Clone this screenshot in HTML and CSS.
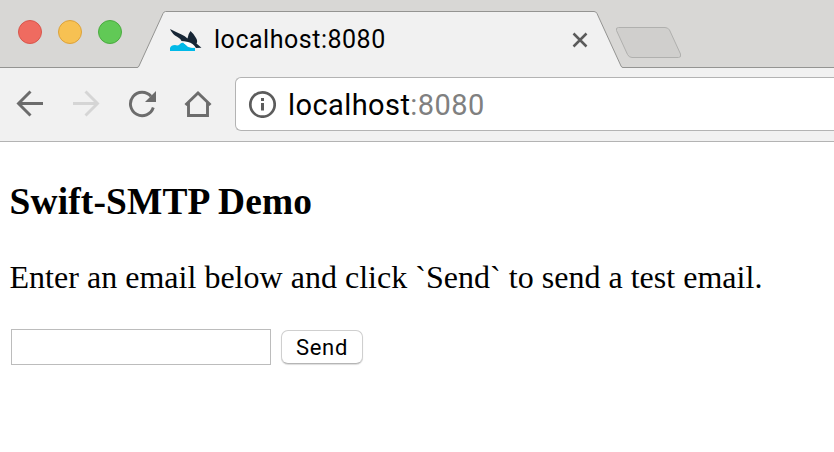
FILE: index.html
```
<!DOCTYPE html>
<html lang="en">
<head>
<meta charset="utf-8">
<title>localhost:8080</title>
<link rel="stylesheet" href="styles.css">
</head>
<body>
<header class="tabstrip">
  <div class="lights"><span class="light red"></span><span class="light yellow"></span><span class="light green"></span></div>
  <div class="tab">
    <svg class="tab-shape" width="486" height="57" viewBox="0 0 486 57"><path d="M0 56.500 Q1.300 56.500 2 55 L26 2.500 Q27 .5 28.500 .5 H457 Q459 .5 460 2.500 L484 55 Q484.700 56.500 486 56.500 V57 H0Z" fill="#f1f1f1"/><path d="M0 56.500 Q1.300 56.500 2 55 L26 2.500 Q27 .5 28.500 .5 H457 Q459 .5 460 2.500 L484 55 Q484.700 56.500 486 56.500" fill="none" stroke="#949492"/></svg>
    <svg class="favicon" width="32" height="24" viewBox="0 0 32 24"><path d="M0 22V19Q1 16 5 16Q8 17 9.500 15.500Q12 12.500 15 15L18 18L25 19V22Z" fill="#00b9e8"/><path d="M13.500 14Q17 12 22 14L25.500 18Q21 20 17.500 17Z" fill="#fff"/><path d="M0 0Q7 3.500 11.500 5.500Q15 7 17.500 9.500Q18 5 20.500 2Q24 5 26 9Q28 12 26.500 14.500L31.500 18.800L26 19Q23 14 18 13Q14 12 11.500 12Q11 10 7.500 8Q2 5 0 0Z" fill="#172635"/></svg>
    <span class="tab-title">localhost:8080</span>
    <svg class="close" width="16" height="16" viewBox="0 0 16 16"><path d="M1.500 1.500L14.500 14.500M14.500 1.500L1.500 14.500" stroke="#5b5b5b" stroke-width="2.500"/></svg>
  </div>
  <svg class="newtab" width="68" height="34" viewBox="0 0 68 34"><path d="M3.500 2.500H50Q53 2.500 54.500 5L65.500 29Q66.500 32.500 63.500 32.500H17Q14 32.500 12.500 29.500L1.500 5.500Q.5 2.500 3.500 2.500Z" fill="#d0cfcd" stroke="#b0b0ae"/></svg>
</header>
<nav class="toolbar">
  <svg class="nav-icon" width="28" height="28" viewBox="0 0 28 28"><path d="M27 13.500H3M14.500 1.500L2.500 13.500L14.500 25.500" fill="none" stroke="#6c6c6c" stroke-width="2.900"/></svg>
  <svg class="nav-icon" width="28" height="28" viewBox="0 0 28 28"><path d="M1 13.500H25M13.500 1.500L25.500 13.500L13.500 25.500" fill="none" stroke="#d5d5d5" stroke-width="2.900"/></svg>
  <svg class="nav-icon" width="28" height="28" viewBox="0 0 28 28"><path d="M23 6.300A11.700 11.700 0 1 0 25.300 17.500" fill="none" stroke="#6c6c6c" stroke-width="2.900"/><path d="M28 1V12H17Z" fill="#6c6c6c"/></svg>
  <svg class="nav-icon" width="28" height="28" viewBox="0 0 28 28"><path d="M1.500 15L14 3L26.500 15M4.500 12V25.500H23.500V12" fill="none" stroke="#6c6c6c" stroke-width="2.900"/></svg>
  <div class="address">
    <svg class="info" width="28" height="28" viewBox="0 0 28 28"><circle cx="14.500" cy="14.500" r="12.200" fill="none" stroke="#5c5c5c" stroke-width="2.700"/><path d="M13 8h3v3h-3zM13 13h3v7.500h-3z" fill="#5c5c5c"/></svg>
    <span class="url">localhost<span class="port">:8080</span></span>
  </div>
</nav>
<main class="page">
  <h3>Swift-SMTP Demo</h3>
  <p>Enter an email below and click `Send` to send a test email.</p>
  <form class="form">
    <input class="email" type="text" aria-label="Email">
    <button class="send" type="button">Send</button>
  </form>
</main>
</body>
</html>
```
FILE: styles.css
```
* { box-sizing: border-box; }
body { margin: 0; height: 452px; overflow: hidden; background: #fff; color: #000; }
svg { display: block; flex: none; }
.tabstrip { height: 68px; display: flex; align-items: flex-start; background: #d8d7d5; border-bottom: 1px solid #949492; }
.lights { display: flex; gap: 16px; padding: 20px 0 0 18px; width: 137px; flex: none; }
.light { width: 24px; height: 24px; border-radius: 50%; border: 1px solid; }
.red { background: #ef6b60; border-color: #d8564c; }
.yellow { background: #f7c152; border-color: #dca23b; }
.green { background: #61c956; border-color: #4bab40; }
.tab { position: relative; width: 486px; height: 57px; margin-top: 11px; display: flex; align-items: center; padding-left: 33px; flex: none; }
.tab-shape { position: absolute; left: 0; top: 0; }
.favicon { position: relative; margin-top: 2px; }
.tab-title { position: relative; margin-left: 12px; width: 358px; font: 25px/30px Roboto, sans-serif; letter-spacing: .52px; }
.close { position: relative; margin-top: 1px; }
.newtab { margin: 25px 0 0 -8px; }
.toolbar { height: 74px; display: flex; align-items: flex-start; background: #f1f1f1; border-bottom: 1px solid #b3b3b3; padding: 9px 0 0 16px; }
.nav-icon { margin: 13px 28px 0 0; }
.nav-icon:nth-child(4) { margin-right: 23px; }
.address { flex: 1; height: 54px; display: flex; align-items: center; background: #fff; border: 1px solid #b3b3b3; border-right: 0; border-radius: 6px 0 0 6px; padding-left: 12px; }
.url { margin-left: 12px; padding-top: 2px; font: 29px/36px Roboto, sans-serif; letter-spacing: .42px; }
.port { color: #808080; }
.page { padding: 38px 10px 0 9.500px; font-family: "Liberation Serif", serif; }
h3 { margin: 0; font-size: 37.44px; line-height: 43px; letter-spacing: .15px; }
p { margin: 36px 0 0; font-size: 32px; line-height: 37px; letter-spacing: .02px; white-space: nowrap; }
.form { display: flex; align-items: center; gap: 10px; margin: 33px 0 0 1.500px; }
.email { width: 260px; height: 36px; padding: 2px; border: 1px solid #bcbcbc; background: #fff; outline: 0; }
.send { width: 82px; height: 34px; padding: 2px 0 0; border: 1px solid #cfcfcf; border-bottom-color: #b5b5b5; border-radius: 7px; background: #fff; box-shadow: 0 1px 1px #ddd; color: #000; font: 22px/30px Roboto, sans-serif; letter-spacing: .7px; }
```
